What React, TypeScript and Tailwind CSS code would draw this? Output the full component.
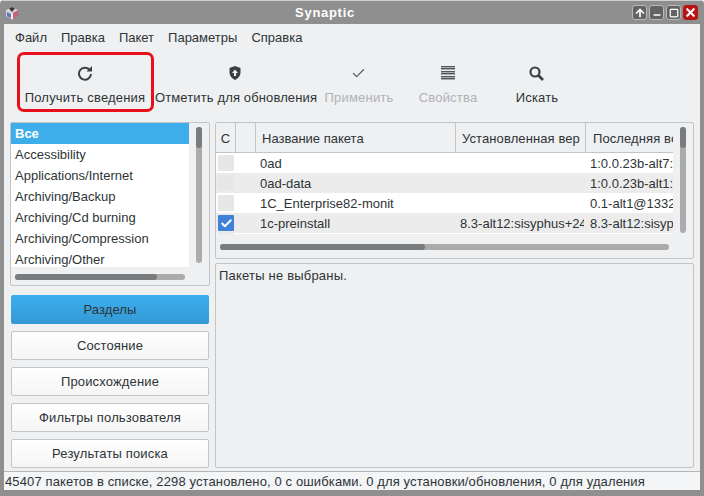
import { ReactNode } from "react";
import { ArrowUp, Check, Minus, Square, X } from "lucide-react";

const categories = [
  "Accessibility",
  "Applications/Internet",
  "Archiving/Backup",
  "Archiving/Cd burning",
  "Archiving/Compression",
  "Archiving/Other",
];

const menus = ["Файл", "Правка", "Пакет", "Параметры", "Справка"];
const filters = ["Состояние", "Происхождение", "Фильтры пользователя", "Результаты поиска"];

const packages = [
  { name: "0ad", installed: "", latest: "1:0.0.23b-alt7:", checked: false },
  { name: "0ad-data", installed: "", latest: "1:0.0.23b-alt1:", checked: false },
  { name: "1C_Enterprise82-monit", installed: "", latest: "0.1-alt1@1332", checked: false },
  { name: "1c-preinstall", installed: "8.3-alt12:sisyphus+24", latest: "8.3-alt12:sisyp", checked: true },
];

const WinButton = ({ children, close }: { children: ReactNode; close?: boolean }) => (
  <div
    className={
      "w-[15px] h-[15px] rounded-[3px] border flex items-center justify-center text-white " +
      (close ? "bg-[#b81414] border-[#b81414]" : "bg-[#636363] border-[#b8b8b8]")
    }
  >
    {children}
  </div>
);

const ToolButton = ({
  icon,
  label,
  width,
  disabled,
  labelClass = "tracking-[0.2px]",
}: {
  icon: ReactNode;
  label: string;
  width: string;
  disabled?: boolean;
  labelClass?: string;
}) => (
  <div className={"flex flex-col items-center shrink-0 " + width}>
    <div className={"h-[16px] flex items-center justify-center mt-[15px] " + (disabled ? "text-[#5c5e60]" : "text-[#3d3f42]")}>
      {icon}
    </div>
    <span className={"mt-[8px] whitespace-nowrap leading-[18px] " + labelClass + " " + (disabled ? "text-[#b0b2b5]" : "text-[#2e3436]")}>
      {label}
    </span>
  </div>
);

const Header = ({ className, children }: { className: string; children?: ReactNode }) => (
  <div className={"h-[29px] pt-[2px] flex items-center border-r border-[#c2c4c6] shrink-0 overflow-hidden whitespace-nowrap " + className}>
    {children}
  </div>
);

export default function App() {
  return (
    <div
      className="w-[704px] h-[496px] flex flex-col bg-[#8f8f8f] text-[13px] text-[#2e3436] overflow-hidden rounded-t-[4px]"
      style={{ fontFamily: '"Liberation Sans", Arial, sans-serif' }}
    >
      {/* title bar */}
      <div className="h-[24px] shrink-0 flex items-center relative pl-[5px] pr-[6px] border-t border-[#d0d0d0]">
        <svg width="14" height="14" viewBox="0 0 14 14">
          <path d="M1 4l6-3 6 3v6l-6 3-6-3z" fill="#d4d4d8" />
          <path d="M4 2.500L7 1l3 1.500L7 6z" fill="#3a3434" />
          <path d="M8 7l5-3v6l-5 3z" fill="#c8607a" />
          <path d="M2 6l4 2v4l-4-2z" fill="#5a78b8" />
          <path d="M6 8l2-1v6l-1 .4-1-.4z" fill="#f0f0f0" />
        </svg>
        <div className="flex-1 text-center font-bold text-white text-[13px] tracking-[0.7px] pr-[1px]">Synaptic</div>
        <div className="flex gap-[2px]">
          <WinButton><ArrowUp size={12} strokeWidth={3.5} /></WinButton>
          <WinButton><Minus size={10} strokeWidth={3.5} className="mt-[5px]" /></WinButton>
          <WinButton><Square size={10} strokeWidth={3} /></WinButton>
          <WinButton close><X size={13} strokeWidth={4} /></WinButton>
        </div>
      </div>

      {/* window body */}
      <div className="flex-1 mx-[4px] mb-[6px] bg-[#eff0f2] flex flex-col min-h-0 relative">
        <div className="h-[26px] pt-[2px] shrink-0 flex items-center gap-[14px] pl-[11px]">
          {menus.map((m) => (
            <span key={m}>{m}</span>
          ))}
        </div>

        {/* toolbar */}
        <div className="h-[72px] shrink-0 flex pl-[10px] relative">
          <ToolButton
            width="w-[142px]"
            label="Получить сведения"
            icon={
              <svg width="16" height="16" viewBox="0 0 16 16" fill="none">
                <path d="M12.600 4.800A6 6 0 1 0 14 9" stroke="currentColor" strokeWidth="2" />
                <path d="M9.500 6.500h5.500V1z" fill="currentColor" />
              </svg>
            }
          />
          <ToolButton
            width="w-[160px]"
            label="Отметить для обновления"
            labelClass="tracking-[0.13px]"
            icon={
              <svg width="14" height="16" viewBox="0 0 14 16" className="-ml-[2px]">
                <path d="M7 1l5.500 2v4.500c0 3.500-2.500 6-5.500 7.500C4 13.500 1.500 11 1.500 7.500V3z" fill="#3d3f42" />
                <path d="M7 4.500L10 8H8v3H6V8H4z" fill="#eff0f2" />
              </svg>
            }
          />
          <ToolButton width="w-[86px]" label="Применить" disabled icon={<Check size={15} strokeWidth={2} className="-ml-[2px]" />} />
          <ToolButton
            width="w-[92px]"
            label="Свойства"
            disabled
            icon={
              <svg width="14" height="15" viewBox="0 0 14 15" stroke="#55575a" strokeWidth="1">
                {[0.5, 5.500, 10.500].map((y) => (
                  <g key={y}>
                    <path d={"M0 " + y + "H14"} />
                    <path d={"M0 " + (y + 1) + "H14"} strokeOpacity="0.45" />
                    <path d={"M0 " + (y + 2) + "H14"} />
                    <path d={"M0 " + (y + 3) + "H14"} strokeOpacity="0.45" />
                  </g>
                ))}
              </svg>
            }
          />
          <ToolButton
            width="w-[86px]"
            label="Искать"
            icon={
              <svg width="15" height="15" viewBox="0 0 15 15" fill="none" stroke="currentColor" className="-ml-[1px]">
                <circle cx="6" cy="6" r="4.500" strokeWidth="2.200" />
                <path d="M9.500 9.500L14 14" strokeWidth="2.600" />
              </svg>
            }
          />
          <div className="absolute left-[13px] top-[2px] w-[137px] h-[60px] border-[3px] border-[#e8101c] rounded-[7px]" />
        </div>

        {/* main */}
        <div className="flex-1 flex min-h-0 pl-[6px] pr-[6px] gap-[5px]">
          {/* left side */}
          <div className="w-[200px] shrink-0 flex flex-col">
            <div className="h-[164px] rounded-[2px] border border-[#c2c4c6] flex flex-col">
              <div className="h-[144px] flex">
                <div className="w-[178px] bg-white overflow-hidden">
                  <div className="h-[21px] bg-[#3daee9] text-white font-bold flex items-center pl-[4px]">Все</div>
                  {categories.map((c) => (
                    <div key={c} className="h-[21px] flex items-center pl-[4px] whitespace-nowrap">
                      {c}
                    </div>
                  ))}
                </div>
                <div className="flex-1 pl-[7px] pt-[4px]">
                  <div className="w-[6px] h-[136px] rounded-full bg-[#ababab]">
                    <div className="w-[6px] h-[21px] rounded-full bg-[#7a7b7d]" />
                  </div>
                </div>
              </div>
              <div className="pl-[4px] pt-[7px]">
                <div className="w-[170px] h-[6px] rounded-full bg-[#ababab]">
                  <div className="w-[142px] h-[6px] rounded-full bg-[#7a7b7d]" />
                </div>
              </div>
            </div>

            <div className="mt-[9px] h-[29px] rounded-[2px] w-[198px] ml-[1px] bg-gradient-to-b from-[#3daef0] to-[#3499d4] flex items-center justify-center text-[#2e3436] tracking-[0.1px]">
              Разделы
            </div>
            {filters.map((f) => (
              <div
                key={f}
                className="mt-[7px] h-[29px] w-[198px] ml-[1px] rounded-[2px] border border-[#c2c4c6] bg-gradient-to-b from-white to-[#f5f5f6] flex items-center justify-center tracking-[0.15px]"
              >
                {f}
              </div>
            ))}
          </div>

          {/* right side */}
          <div className="flex-1 flex flex-col min-w-0">
            <div className="h-[137px] rounded-[2px] border border-[#c2c4c6] flex flex-col">
              <div className="h-[111px] flex">
                <div className="w-[457px] overflow-hidden">
                  <div className="flex border-b border-[#c2c4c6] h-[30px]">
                    <Header className="w-[20px] justify-center">С</Header>
                    <Header className="w-[20px]" />
                    <Header className="w-[200px] pl-[6px]">Название пакета</Header>
                    <Header className="w-[130px] pl-[6px] tracking-[0.1px]">Установленная вер</Header>
                    <div className="pl-[7px] pt-[2px] h-[29px] flex items-center whitespace-nowrap overflow-hidden w-[87px] tracking-[0.1px]">Последняя версия</div>
                  </div>
                  {packages.map((p, i) => (
                    <div key={p.name} className={"h-[20px] pt-[1px] flex items-center " + (i % 2 ? "bg-[#ececec]" : "bg-white")}>
                      <div className="w-[40px] shrink-0 pl-[2px] -mt-[1px]">
                        <div
                          className={
                            "w-[16px] h-[16px] rounded-[1px] flex items-center justify-center " +
                            (p.checked ? "bg-[#3f80d8]" : "bg-[#e7e7e7]")
                          }
                        >
                          {p.checked && <Check size={13} strokeWidth={3.500} className="text-white" />}
                        </div>
                      </div>
                      <div className="w-[204px] shrink-0 pl-[4px] whitespace-nowrap">{p.name}</div>
                      <div className="w-[124px] mr-[6px] shrink-0 overflow-hidden whitespace-nowrap">{p.installed}</div>
                      <div className="flex-1 overflow-hidden whitespace-nowrap">{p.latest}</div>
                    </div>
                  ))}
                  <div className="h-[4px] bg-white pl-[2px]">
                    <div className="w-[16px] h-[4px] bg-[#e7e7e7]" />
                  </div>
                </div>
                <div className="pl-[7px] pt-[4px]">
                  <div className="w-[6px] h-[106px] rounded-full bg-[#ababab]">
                    <div className="w-[6px] h-[21px] rounded-full bg-[#7a7b7d]" />
                  </div>
                </div>
              </div>
              <div className="pl-[4px] pt-[10px]">
                <div className="w-[449px] h-[6px] rounded-full bg-[#ababab]">
                  <div className="w-[205px] h-[6px] rounded-full bg-[#7a7b7d]" />
                </div>
              </div>
            </div>

            <div className="mt-[4px] h-[205px] rounded-[2px] border border-[#c2c4c6] pl-[3px] pt-[3px] leading-[18px] tracking-[0.2px]">
              Пакеты не выбраны.
            </div>
          </div>
        </div>

        {/* status bar */}
        <div className="h-[19px] shrink-0 border-t border-[#b4b6b8] flex items-center pt-[2px] pl-[1px] whitespace-nowrap bg-[#f4f5f6] tracking-[0.125px]">
          45407 пакетов в списке, 2298 установлено, 0 с ошибками. 0 для установки/обновления, 0 для удаления
        </div>
      </div>
    </div>
  );
}
